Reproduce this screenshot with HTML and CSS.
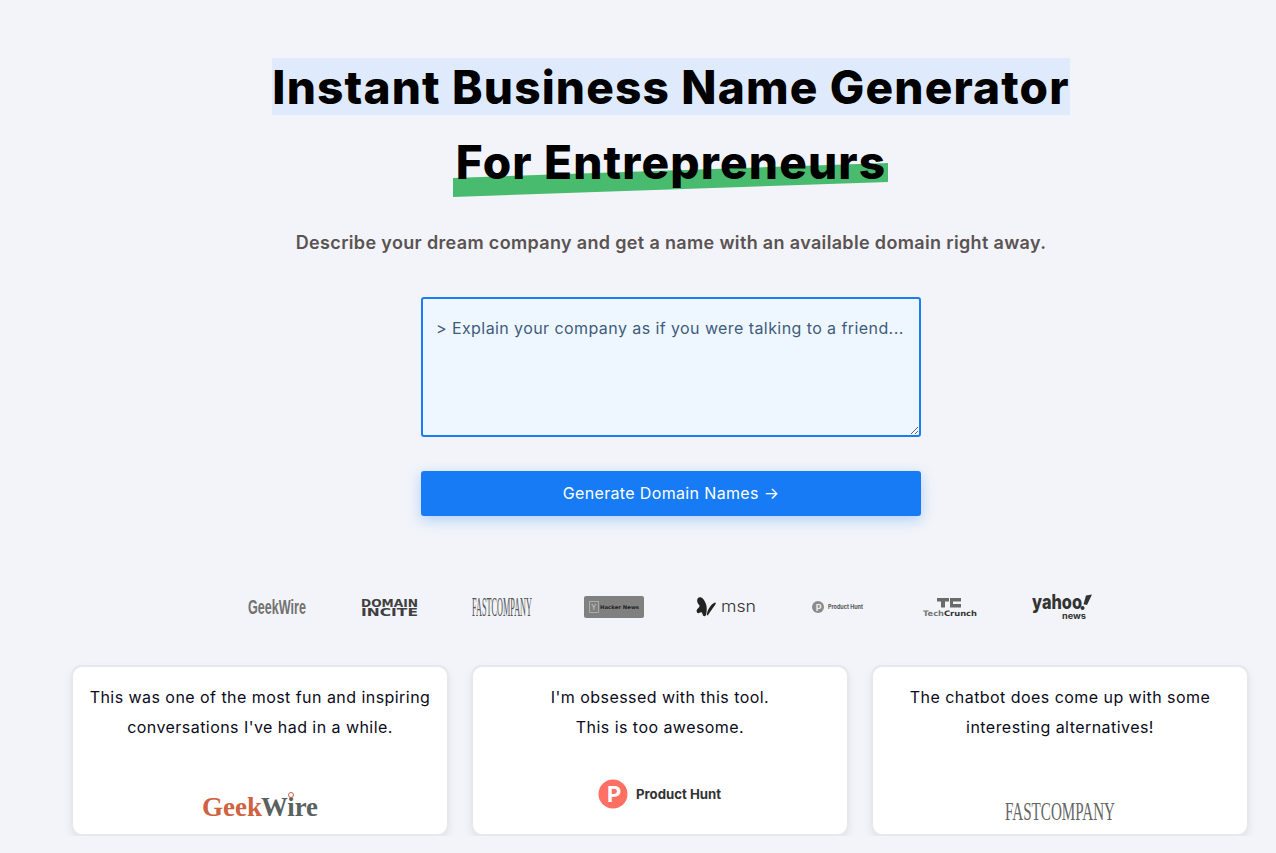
FILE: index.html
```html
<!DOCTYPE html>
<html lang="en">
<head>
  <meta charset="UTF-8">
  <meta name="viewport" content="width=device-width, initial-scale=1.0">
  <title>Instant Business Name Generator</title>
  <link rel="stylesheet" href="styles.css">
</head>
<body>

  <section class="hero">
    <h1 class="hero-title">
      <span class="title-line"><span class="title-mark">Instant Business Name Generator</span></span>
      <span class="title-line">
        <span class="title-under">
          <svg class="under-stroke" viewBox="0 0 435 34" preserveAspectRatio="none"><polygon points="0,15 435,0 435,19 0,34" fill="#48bb6e"/></svg>
          <span class="under-text">For Entrepreneurs</span>
        </span>
      </span>
    </h1>
    <p class="hero-sub">Describe your dream company and get a name with an available domain right away.</p>

    <form class="name-form">
      <textarea class="name-input" placeholder="> Explain your company as if you were talking to a friend..."></textarea>
      <button class="name-btn" type="button">Generate Domain Names →</button>
    </form>

    <div class="press-row">
      <svg class="press-logo" viewBox="0 0 60 30">
        <text class="l-arial" x="0" y="22" font-size="20" fill="#727272" textLength="58" lengthAdjust="spacingAndGlyphs">GeekWire</text>
      </svg>
      <svg class="press-logo" viewBox="0 0 60 30">
        <text class="l-wide" x="1" y="14.500" font-size="10.500" fill="#3f3f3f" textLength="57" lengthAdjust="spacingAndGlyphs">DOMAIN</text>
        <text class="l-wide" x="1" y="23.500" font-size="10.500" fill="#3f3f3f" textLength="57" lengthAdjust="spacingAndGlyphs">INCITE</text>
      </svg>
      <svg class="press-logo" viewBox="0 0 60 30">
        <text class="l-serif" x="0" y="24" font-size="28" fill="#555" textLength="60" lengthAdjust="spacingAndGlyphs">FASTCOMPANY</text>
      </svg>
      <svg class="press-logo" viewBox="0 0 60 30">
        <rect x="0" y="4" width="60" height="22" rx="2" fill="#808080"/>
        <rect x="5.500" y="9.500" width="9" height="11" fill="none" stroke="#b5b5b5" stroke-width="0.800"/>
        <text class="l-sans" x="7.200" y="18" font-size="7.500" fill="#ccc">Y</text>
        <text class="l-wide" x="16" y="17" font-size="5" fill="#222" textLength="39" lengthAdjust="spacingAndGlyphs">Hacker News</text>
      </svg>
      <svg class="press-logo" viewBox="0 0 60 30">
        <path d="M2 6C5 4 8 7 10 12C11 15 11 19 10 23C9 25 7 24.500 6.500 22C6 20 5 19.500 3 21C1 22 0 19 1 17.500C2 16 4 15 3.500 13.500C2 12 0 9 2 6z" fill="#222"/>
        <path d="M19 10.500C20 10 20 12 19 13L12 23C11 24 10.500 23 11 21.500C12 17 15 12 19 10.500z" fill="#222"/>
        <text class="l-thin" x="25" y="20" font-size="16" fill="#333" textLength="35" lengthAdjust="spacingAndGlyphs">msn</text>
      </svg>
      <svg class="press-logo press-logo-ph" viewBox="0 0 52 30">
        <circle cx="6" cy="15" r="6" fill="#8c8c8c"/>
        <text class="l-sans-bold" x="3.700" y="18.500" font-size="9" fill="#eee">P</text>
        <text class="l-sans-bold" x="16" y="17" font-size="5.500" fill="#555" textLength="35" lengthAdjust="spacingAndGlyphs">Product Hunt</text>
      </svg>
      <svg class="press-logo press-logo-tc" viewBox="0 0 54 30">
        <path d="M14 6h12v3.500h-4v6h-4v-6h-4zM27 6h11v3.500h-8v2.500h8v3.500H27z" fill="#6a6a6a"/>
        <text class="l-wide" x="0" y="24" font-size="7.500" fill="#777" textLength="21" lengthAdjust="spacingAndGlyphs">Tech</text>
        <text class="l-wide" x="21" y="24" font-size="7.500" fill="#333" textLength="33" lengthAdjust="spacingAndGlyphs">Crunch</text>
      </svg>
      <svg class="press-logo" viewBox="0 0 60 30">
        <text class="l-heavy" x="0" y="17" font-size="20" fill="#333" textLength="50" lengthAdjust="spacingAndGlyphs">yahoo</text>
        <path d="M54 3.500l6-1-5 10.500-3.500-.8zM50.500 14a2 2 0 1 0 .1 0z" fill="#333"/>
        <text class="l-sans-bold" x="30" y="27" font-size="8.500" fill="#333" textLength="24" lengthAdjust="spacingAndGlyphs">news</text>
      </svg>
    </div>
  </section>

  <section class="quotes">
    <div class="quote-card">
      <p class="quote-text">This was one of the most fun and inspiring conversations I've had in a while.</p>
      <div class="quote-logo">
        <svg class="card-logo logo-gw" viewBox="0 0 116 30">
          <text class="l-serif-bold" x="0" y="25" font-size="28" fill="#cf6240" textLength="60" lengthAdjust="spacingAndGlyphs">Geek</text>
          <text class="l-serif-bold" x="59" y="25" font-size="28" fill="#59625f" textLength="57" lengthAdjust="spacingAndGlyphs">Wire</text>
          <circle cx="89" cy="4" r="2.500" fill="none" stroke="#cf6240" stroke-width="1"/>
        </svg>
      </div>
    </div>
    <div class="quote-card">
      <p class="quote-text">I'm obsessed with this tool.<br>This is too awesome.</p>
      <div class="quote-logo">
        <svg class="card-logo logo-ph" viewBox="0 0 124 30">
          <circle cx="15" cy="15" r="14.500" fill="#ff6f63"/>
          <text class="l-sans-bold" x="9" y="23" font-size="22" fill="#fff">P</text>
          <text class="l-sans-bold" x="38" y="19.500" font-size="13" fill="#333" textLength="85" lengthAdjust="spacingAndGlyphs">Product Hunt</text>
        </svg>
      </div>
    </div>
    <div class="quote-card">
      <p class="quote-text">The chatbot does come up with some interesting alternatives!</p>
      <div class="quote-logo">
        <svg class="card-logo logo-fc" viewBox="0 0 110 20">
          <text class="l-serif" x="0" y="18" font-size="26" fill="#666" textLength="110" lengthAdjust="spacingAndGlyphs">FASTCOMPANY</text>
        </svg>
      </div>
    </div>
  </section>

</body>
</html>
```

FILE: styles.css
```css
* {
  box-sizing: border-box;
}

body {
  margin: 0;
  background-color: #f2f4f9;
  font-family: Inter, "Liberation Sans", sans-serif;
  color: #0b0b20;
}

.hero {
  padding: 50px 0 0 66px;
  display: flex;
  flex-direction: column;
  align-items: center;
}

.hero-title {
  margin: 0;
  font-size: 46px;
  font-weight: 800;
  line-height: 75px;
  letter-spacing: 1.16px;
  color: #000;
  text-align: center;
}

.title-line {
  display: block;
}

.title-mark {
  background-color: #dfebfc;
  padding: 1px 0 0;
}

.title-under {
  position: relative;
  display: inline-block;
}

.under-text {
  position: relative;
}

.under-stroke {
  position: absolute;
  left: -3px;
  top: 38px;
  width: 435px;
  height: 34px;
}

.hero-sub {
  margin: 29px 0 0;
  font-size: 18px;
  font-weight: 600;
  line-height: 28px;
  letter-spacing: 0.34px;
  color: #5a5352;
}

.name-form {
  width: 500px;
  margin-top: 40px;
  display: flex;
  flex-direction: column;
  gap: 34px;
}

.name-input {
  display: block;
  width: 100%;
  height: 140px;
  padding: 15px 13px;
  border: 2px solid #1a7df5;
  border-radius: 3px;
  background-color: #eef7ff;
  font-family: inherit;
  font-size: 16px;
  line-height: 28px;
  letter-spacing: 0.42px;
  outline: none;
}

.name-input::placeholder {
  color: #3f5c7c;
  opacity: 1;
}

.name-btn {
  height: 45px;
  padding: 0 0 2px;
  border: none;
  border-radius: 3px;
  background-color: #167bf4;
  color: #fff;
  font-family: inherit;
  font-size: 16px;
  font-weight: 400;
  letter-spacing: 0.35px;
  box-shadow: 0 4px 14px rgba(22, 123, 244, 0.3);
}

.press-row {
  margin: 76px 3px 0 0;
  display: flex;
  align-items: center;
  gap: 52px;
}

.press-logo {
  display: block;
  width: 60px;
  height: 30px;
  overflow: visible;
}

.press-logo-ph {
  width: 52px;
  margin: 0 4px;
}

.press-logo-tc {
  width: 54px;
  margin: 0 3px;
}

.l-arial {
  font-family: "Liberation Sans", sans-serif;
  font-weight: 700;
}

.l-serif {
  font-family: "Liberation Serif", serif;
}

.l-serif-bold {
  font-family: "Liberation Serif", serif;
  font-weight: 700;
}

.l-wide {
  font-family: "DejaVu Sans", sans-serif;
  font-weight: 700;
}

.l-sans {
  font-family: Inter, sans-serif;
}

.l-thin {
  font-family: Inter, sans-serif;
  font-weight: 300;
}

.l-sans-bold {
  font-family: Inter, sans-serif;
  font-weight: 700;
}

.l-heavy {
  font-family: Inter, sans-serif;
  font-weight: 800;
}

.quotes {
  margin: 43px 0 0 71px;
  display: flex;
  gap: 22px;
}

.quote-card {
  width: 378px;
  height: 171px;
  padding: 15px 12px 0;
  border: 2px solid #e6e8ee;
  border-radius: 11px;
  background-color: #fff;
  box-shadow: 0 4px 8px rgba(0, 0, 0, 0.08);
  display: flex;
  flex-direction: column;
  text-align: center;
}

.quote-text {
  margin: 0;
  font-size: 16px;
  line-height: 30px;
  letter-spacing: 0.45px;
}

.quote-logo {
  flex: 1;
  display: flex;
  justify-content: center;
  align-items: flex-end;
}

.card-logo {
  display: block;
  overflow: visible;
}

.logo-gw {
  width: 116px;
  height: 30px;
  margin-bottom: 13px;
}

.logo-ph {
  width: 124px;
  height: 30px;
  margin-bottom: 25px;
}

.logo-fc {
  width: 110px;
  height: 20px;
  margin-bottom: 12px;
}
```
